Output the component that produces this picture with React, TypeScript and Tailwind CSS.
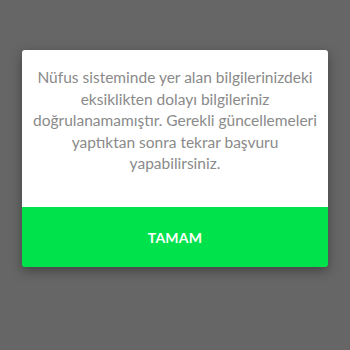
export default function App() {
  return (
    <div className="w-[350px] h-[350px] bg-[#666666] flex justify-center pt-[50px]" style={{ fontFamily: 'Lato, "Noto Sans", sans-serif' }}>
      <div className="w-[306px] h-[217px] flex flex-col rounded-[3px] overflow-hidden shadow-[0_4px_12px_rgba(0,0,0,0.35)]">
        <div className="bg-white h-[157px] pt-[17px] px-2 text-center text-[15.5px] leading-[21.5px] text-[#8a8a8a]">
          Nüfus sisteminde yer alan bilgilerinizdeki eksiklikten dolayı bilgileriniz doğrulanamamıştır. Gerekli güncellemeleri yaptıktan sonra tekrar başvuru yapabilirsiniz.
        </div>
        <div className="bg-[#00e24c] flex-1 flex items-center justify-center text-white font-bold text-[14px] tracking-[0.2px]">
          TAMAM
        </div>
      </div>
    </div>
  );
}
